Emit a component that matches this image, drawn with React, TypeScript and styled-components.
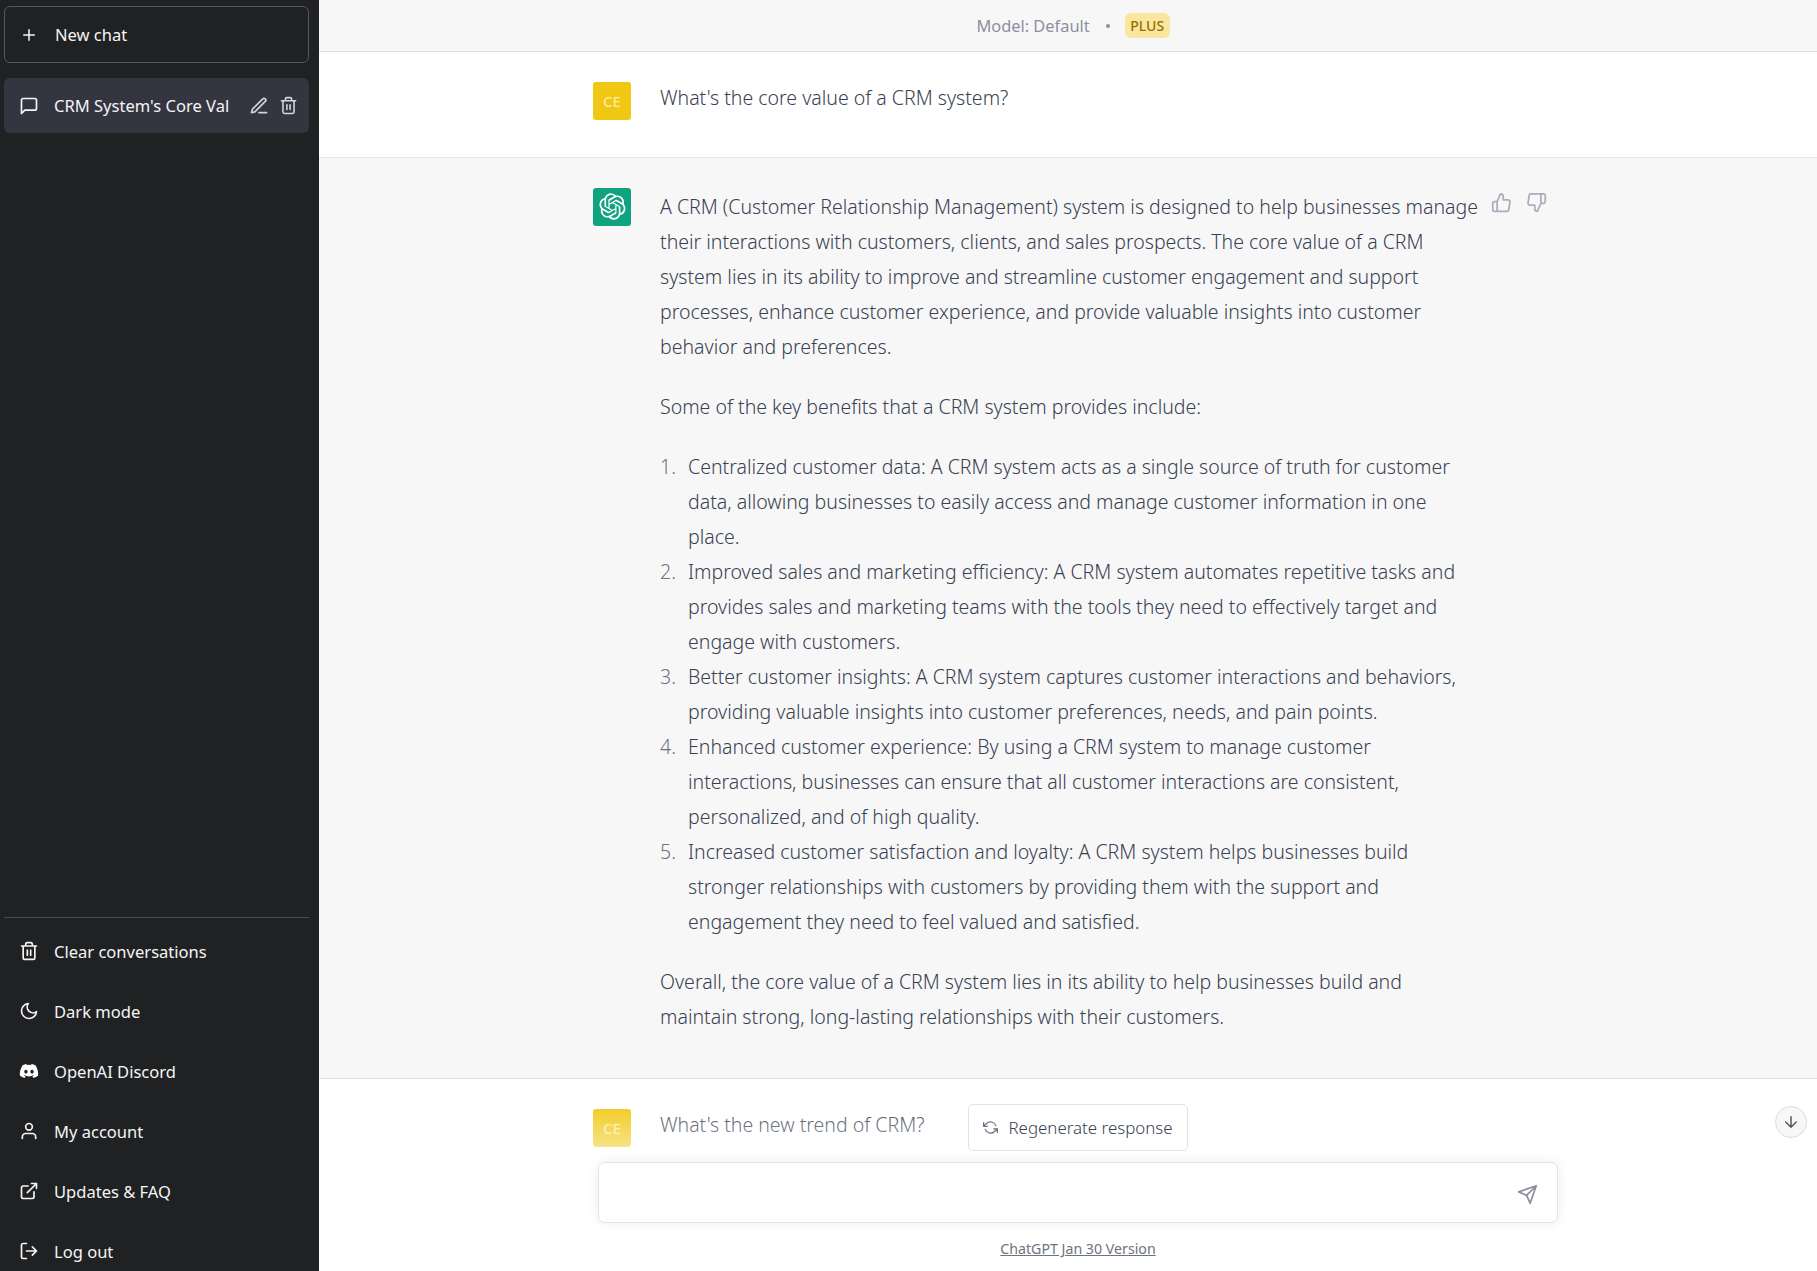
import * as React from "react";
import styled, { createGlobalStyle } from "styled-components";
import { FaDiscord } from "react-icons/fa";

const GlobalStyle = createGlobalStyle`
  html, body {
    margin: 0;
    padding: 0;
    background: #fff;
  }
  body {
    font-family: "Noto Sans", "Open Sans", sans-serif;
    color: #374151;
  }
  * {
    box-sizing: border-box;
  }
`;

const Page = styled.div`
  display: grid;
  grid-template-columns: 319px 1fr;
  width: 1817px;
  height: 1271px;
  overflow: hidden;
`;

const Sidebar = styled.aside`
  display: flex;
  flex-direction: column;
  height: 1271px;
  overflow: hidden;
  padding: 6px 10px 0 4px;
  background: #202123;
  color: #f5f5f5;
  font-size: 16.55px;
`;

const NewChatButton = styled.div`
  display: flex;
  flex: none;
  align-items: center;
  gap: 17px;
  height: 57px;
  padding-left: 15px;
  border: 1px solid #56565f;
  border-radius: 6px;
`;

const ChatList = styled.div`
  flex: 0 0 854px;
  padding-top: 15px;
`;

const ActiveChat = styled.div`
  display: flex;
  align-items: center;
  height: 55px;
  padding-left: 15px;
  border-radius: 6px;
  background: #343541;
`;

const ChatTitle = styled.span`
  margin-left: 15px;
  width: 179px;
  overflow: hidden;
  white-space: nowrap;
`;

const ChatActions = styled.span`
  display: flex;
  align-items: center;
  gap: 10px;
  margin-left: 16px;
  color: #d1d5db;
`;

const Divider = styled.div`
  flex: none;
  height: 1px;
  margin-bottom: 3px;
  background: #4a4b53;
`;

const NavItem = styled.div`
  display: flex;
  flex: none;
  align-items: center;
  gap: 15px;
  height: 60px;
  padding-left: 15px;
`;

const Main = styled.main`
  position: relative;
  display: flex;
  flex-direction: column;
  overflow: hidden;
  background: #fff;
`;

const TopBar = styled.header`
  display: flex;
  flex: none;
  align-items: center;
  justify-content: center;
  height: 52px;
  padding-left: 10px;
  border-bottom: 1px solid #dfdfe2;
  background: #f7f7f8;
  color: #8e8ea0;
  font-size: 16.4px;
`;

const Dot = styled.span`
  width: 4px;
  height: 4px;
  margin: 0 15px 0 16px;
  border-radius: 50%;
  background: #8e8ea0;
`;

const PlusBadge = styled.span`
  padding: 2px 5.5px;
  border-radius: 6px;
  background: #fae69e;
  color: #927201;
  font-size: 14px;
  font-weight: 500;
  line-height: 21px;
`;

const MessageRow = styled.section<{ $tone: "white" | "gray"; $height: number }>`
  display: flex;
  flex: none;
  height: ${(p) => p.$height}px;
  padding: 30px 0 0 274px;
  border-bottom: 1px solid ${(p) => (p.$tone === "gray" ? "#dfdfe2" : "#e6e6e8")};
  background: ${(p) => (p.$tone === "gray" ? "#f7f7f8" : "#fff")};
`;

const Avatar = styled.div<{ $bg: string }>`
  display: flex;
  flex: none;
  align-items: center;
  justify-content: center;
  width: 38px;
  height: 38px;
  padding-bottom: 1px;
  border-radius: 3px;
  background: ${(p) => p.$bg};
  color: #fdeb9c;
  font-size: 15px;
  font-weight: 500;
`;

const MessageText = styled.div<{ $top: number }>`
  width: 820px;
  margin: ${(p) => p.$top}px 0 0 29px;
  font-size: 19.5px;
  font-weight: 300;
  line-height: 34.95px;
`;

const Paragraph = styled.p`
  margin: 0 0 25.3px;
  &:last-child {
    margin-bottom: 0;
  }
`;

const NumberedList = styled.ol`
  margin: 0 0 25.3px;
  padding: 0;
  list-style: none;
  counter-reset: benefit;
`;

const ListItem = styled.li`
  display: grid;
  grid-template-columns: 28px 772px;
  counter-increment: benefit;
  &::before {
    content: counter(benefit) ".";
    color: #6b7280;
  }
`;

const Feedback = styled.div`
  display: flex;
  gap: 14px;
  margin: 4px 0 0 11px;
  color: #acacbe;
`;

const BottomFade = styled.div`
  position: absolute;
  right: 0;
  bottom: 0;
  left: 0;
  display: flex;
  flex-direction: column;
  align-items: center;
  height: 171px;
  padding: 4px 0 0 20px;
  background: linear-gradient(180deg, rgba(255, 255, 255, 0) 0%, rgba(255, 255, 255, 0.5) 28%, rgba(255, 255, 255, 0.96) 50%, #fff 70%);
`;

const RegenerateButton = styled.div`
  display: flex;
  flex: none;
  align-items: center;
  justify-content: center;
  gap: 10px;
  width: 220px;
  height: 47px;
  border: 1px solid #e3e3e6;
  border-radius: 5px;
  background: #fff;
  font-size: 16.9px;
  font-weight: 300;
  color: #374151;
`;

const RefreshGlyph = styled.span`
  display: flex;
  color: #6b7280;
`;

const InputBox = styled.div`
  display: flex;
  flex: none;
  align-items: center;
  justify-content: flex-end;
  width: 960px;
  height: 61px;
  margin-top: 11px;
  padding: 4px 19px 0 0;
  border: 1px solid #e4e4e7;
  border-radius: 7px;
  background: #fff;
  box-shadow: 0 0 12px rgba(0, 0, 0, 0.08);
  color: #8e8ea0;
`;

const VersionLink = styled.a`
  margin-top: 16px;
  color: #6f7280;
  font-size: 14.2px;
  line-height: 20px;
  text-decoration: underline;
`;

const ScrollDownButton = styled.div`
  position: absolute;
  top: 1106px;
  right: 10px;
  display: flex;
  align-items: center;
  justify-content: center;
  width: 32px;
  height: 32px;
  border: 1px solid #dcdce0;
  border-radius: 50%;
  background: #f7f7f8;
  color: #565869;
`;

const Svg = styled.svg<{ $size: number }>`
  flex: none;
  width: ${(p) => p.$size}px;
  height: ${(p) => p.$size}px;
  fill: none;
  stroke: currentColor;
  stroke-width: 2;
  stroke-linecap: round;
  stroke-linejoin: round;
`;

const DiscordIcon = styled(FaDiscord)`
  flex: none;
  width: 20px;
  height: 20px;
  color: #fff;
`;

const ICONS: Record<string, React.ReactNode> = {
  plus: <path d="M12 5v14M5 12h14" />,
  message: <path d="M21 15a2 2 0 0 1-2 2H7l-4 4V5a2 2 0 0 1 2-2h14a2 2 0 0 1 2 2z" />,
  edit: <path d="M12 20h9M16.5 3.5a2.12 2.12 0 0 1 3 3L7 19l-4 1 1-4L16.5 3.5z" />,
  trash: <path d="M3 6h18M19 6v14a2 2 0 0 1-2 2H7a2 2 0 0 1-2-2V6m3 0V4a2 2 0 0 1 2-2h4a2 2 0 0 1 2 2v2M10 11v6M14 11v6" />,
  moon: <path d="M21 12.79A9 9 0 1 1 11.21 3 7 7 0 0 0 21 12.79z" />,
  user: <path d="M20 21v-2a4 4 0 0 0-4-4H8a4 4 0 0 0-4 4v2M12 11a4 4 0 1 0 0-8 4 4 0 0 0 0 8z" />,
  external: <path d="M18 13v6a2 2 0 0 1-2 2H5a2 2 0 0 1-2-2V8a2 2 0 0 1 2-2h6M15 3h6v6M10 14L21 3" />,
  logout: <path d="M9 21H5a2 2 0 0 1-2-2V5a2 2 0 0 1 2-2h4M16 17l5-5-5-5M21 12H9" />,
  thumbUp: <path d="M14 9V5a3 3 0 0 0-3-3l-4 9v11h11.28a2 2 0 0 0 2-1.7l1.38-9a2 2 0 0 0-2-2.3zM7 22H4a2 2 0 0 1-2-2v-7a2 2 0 0 1 2-2h3" />,
  thumbDown: <path d="M10 15v4a3 3 0 0 0 3 3l4-9V2H5.72a2 2 0 0 0-2 1.7l-1.38 9a2 2 0 0 0 2 2.3zm7-13h2.67A2.31 2.31 0 0 1 22 4v7a2.31 2.31 0 0 1-2.33 2H17" />,
  refresh: <path d="M1 4v6h6M23 20v-6h-6M20.49 9A9 9 0 0 0 5.64 5.64L1 10m22 4l-4.64 4.36A9 9 0 0 1 3.51 15" />,
  send: <path d="M22 2L11 13M22 2l-7 20-4-9-9-4 20-7z" />,
  down: <path d="M12 5v14M19 12l-7 7-7-7" />,
};

function Icon({ name, size = 20 }: { name: string; size?: number }) {
  return (
    <Svg $size={size} viewBox="0 0 24 24">
      {ICONS[name]}
    </Svg>
  );
}

function OpenAILogo() {
  return (
    <svg width="27" height="27" viewBox="0 0 41 41" fill="#fff">
      <path d="M37.5324 16.8707C37.9808 15.5241 38.1363 14.0974 37.9886 12.6859C37.8409 11.2744 37.3934 9.91076 36.676 8.68622C35.6126 6.83404 33.9882 5.3676 32.0373 4.4985C30.0864 3.62941 27.9098 3.40259 25.8215 3.85078C24.8796 2.7893 23.7219 1.94125 22.4257 1.36341C21.1295 0.785575 19.7249 0.491269 18.3058 0.500197C16.1708 0.495044 14.0893 1.16803 12.3614 2.42214C10.6335 3.67624 9.34853 5.44666 8.6917 7.47815C7.30085 7.76286 5.98686 8.3414 4.8377 9.17505C3.68854 10.0087 2.73073 11.0782 2.02839 12.312C0.956464 14.1591 0.498905 16.2988 0.721698 18.4228C0.944492 20.5467 1.83612 22.5449 3.268 24.1293C2.81966 25.4759 2.66413 26.9026 2.81182 28.3141C2.95951 29.7256 3.40701 31.0892 4.12437 32.3138C5.18791 34.1659 6.8123 35.6322 8.76321 36.5013C10.7141 37.3704 12.8907 37.5973 14.9789 37.1492C15.9208 38.2107 17.0786 39.0587 18.3747 39.6366C19.6709 40.2144 21.0755 40.5087 22.4946 40.4998C24.6307 40.5054 26.7133 39.8321 28.4418 38.5772C30.1704 37.3223 31.4556 35.5506 32.1119 33.5179C33.5027 33.2332 34.8167 32.6547 35.9659 31.821C37.115 30.9874 38.0728 29.9178 38.7752 28.684C39.8458 26.8371 40.3023 24.6979 40.0789 22.5748C39.8556 20.4517 38.9639 18.4544 37.5324 16.8707ZM22.4978 37.8849C20.7443 37.8874 19.0459 37.2733 17.6994 36.1501C17.7601 36.117 17.8666 36.0586 17.936 36.0161L25.9004 31.4156C26.1003 31.3019 26.2663 31.137 26.3813 30.9378C26.4964 30.7386 26.5563 30.5124 26.5549 30.2825V19.0542L29.9213 20.998C29.9389 21.0068 29.9541 21.0198 29.9656 21.0359C29.977 21.052 29.9842 21.0707 29.9867 21.0902V30.3889C29.9842 32.375 29.1946 34.2791 27.7909 35.6841C26.3872 37.0892 24.4838 37.8806 22.4978 37.8849ZM6.39227 31.0064C5.51397 29.4888 5.19742 27.7107 5.49804 25.9832C5.55718 26.0187 5.66048 26.0818 5.73461 26.1244L13.699 30.7248C13.8975 30.8408 14.1233 30.902 14.3532 30.902C14.583 30.902 14.8088 30.8408 15.0073 30.7248L24.731 25.1103V28.9979C24.7321 29.0177 24.7283 29.0376 24.7199 29.0556C24.7115 29.0736 24.6988 29.0893 24.6829 29.1012L16.6317 33.7497C14.9096 34.7416 12.8643 35.0097 10.9447 34.4954C9.02506 33.9811 7.38785 32.7263 6.39227 31.0064ZM4.29707 13.6194C5.17156 12.0998 6.55279 10.9364 8.19885 10.3327C8.19885 10.4013 8.19491 10.5228 8.19491 10.6071V19.808C8.19351 20.0378 8.25334 20.2638 8.36823 20.4629C8.48312 20.6619 8.64893 20.8267 8.84863 20.9404L18.5723 26.5542L15.206 28.4979C15.1894 28.5089 15.1703 28.5155 15.1505 28.5173C15.1307 28.5191 15.1107 28.516 15.0924 28.5082L7.04046 23.8557C5.32135 22.8601 4.06716 21.2235 3.55289 19.3046C3.03862 17.3858 3.30624 15.3413 4.29707 13.6194ZM31.955 20.0556L22.2312 14.4411L25.5976 12.4981C25.6142 12.4872 25.6333 12.4805 25.6531 12.4787C25.6729 12.4769 25.6928 12.4801 25.7111 12.4879L33.7631 17.1364C34.9967 17.849 36.0017 18.8982 36.6606 20.1613C37.3194 21.4244 37.6047 22.849 37.4832 24.2684C37.3617 25.6878 36.8382 27.0432 35.9743 28.1759C35.1103 29.3086 33.9415 30.1717 32.6047 30.6641C32.6047 30.5947 32.6047 30.4733 32.6047 30.3889V21.188C32.6066 20.9586 32.5474 20.7328 32.4332 20.5338C32.319 20.3348 32.154 20.1698 31.955 20.0556ZM35.3055 15.0128C35.2464 14.9765 35.1431 14.9142 35.069 14.8717L27.1045 10.2712C26.906 10.1554 26.6803 10.0943 26.4504 10.0943C26.2206 10.0943 25.9948 10.1554 25.7963 10.2712L16.0726 15.8858V11.9982C16.0715 11.9783 16.0753 11.9585 16.0837 11.9405C16.0921 11.9225 16.1048 11.9068 16.1207 11.8949L24.1719 7.25025C25.4053 6.53903 26.8158 6.19376 28.2383 6.25482C29.6608 6.31589 31.0364 6.78077 32.2044 7.59508C33.3723 8.40939 34.2842 9.53945 34.8334 10.8531C35.3826 12.1667 35.5464 13.6095 35.3055 15.0128ZM14.2424 21.9419L10.8752 19.9981C10.8576 19.9893 10.8423 19.9763 10.8309 19.9602C10.8195 19.9441 10.8122 19.9254 10.8098 19.9058V10.6071C10.8107 9.18295 11.2173 7.78848 11.9819 6.58696C12.7466 5.38544 13.8377 4.42659 15.1275 3.82264C16.4173 3.21869 17.8524 2.99464 19.2649 3.1767C20.6775 3.35876 22.0089 3.93941 23.1034 4.85067C23.0427 4.88379 22.937 4.94215 22.8668 4.98473L14.9024 9.58517C14.7025 9.69878 14.5366 9.86356 14.4215 10.0626C14.3065 10.2616 14.2466 10.4877 14.2479 10.7175L14.2424 21.9419ZM16.071 17.9991L20.4018 15.4978L24.7325 17.9975V22.9985L20.4018 25.4983L16.071 22.9985V17.9991Z" />
    </svg>
  );
}

const BENEFITS = [
  "Centralized customer data: A CRM system acts as a single source of truth for customer data, allowing businesses to easily access and manage customer information in one place.",
  "Improved sales and marketing efficiency: A CRM system automates repetitive tasks and provides sales and marketing teams with the tools they need to effectively target and engage with customers.",
  "Better customer insights: A CRM system captures customer interactions and behaviors, providing valuable insights into customer preferences, needs, and pain points.",
  "Enhanced customer experience: By using a CRM system to manage customer interactions, businesses can ensure that all customer interactions are consistent, personalized, and of high quality.",
  "Increased customer satisfaction and loyalty: A CRM system helps businesses build stronger relationships with customers by providing them with the support and engagement they need to feel valued and satisfied.",
];

const NAV_LINKS = [
  { icon: "trash", label: "Clear conversations" },
  { icon: "moon", label: "Dark mode" },
  { icon: "discord", label: "OpenAI Discord" },
  { icon: "user", label: "My account" },
  { icon: "external", label: "Updates & FAQ" },
  { icon: "logout", label: "Log out" },
];

export default function App() {
  return (
    <Page>
      <GlobalStyle />
      <Sidebar>
        <NewChatButton>
          <Icon name="plus" size={18} />
          New chat
        </NewChatButton>
        <ChatList>
          <ActiveChat>
            <Icon name="message" size={20} />
            <ChatTitle>CRM System's Core Val</ChatTitle>
            <ChatActions>
              <Icon name="edit" size={20} />
              <Icon name="trash" size={19} />
            </ChatActions>
          </ActiveChat>
        </ChatList>
        <Divider />
        {NAV_LINKS.map((link) => (
          <NavItem key={link.label}>
            {link.icon === "discord" ? <DiscordIcon /> : <Icon name={link.icon} size={20} />}
            {link.label}
          </NavItem>
        ))}
      </Sidebar>
      <Main>
        <TopBar>
          Model: Default
          <Dot />
          <PlusBadge>PLUS</PlusBadge>
        </TopBar>
        <MessageRow $tone="white" $height={106}>
          <Avatar $bg="#f0c814">CE</Avatar>
          <MessageText $top={-1}>What's the core value of a CRM system?</MessageText>
        </MessageRow>
        <MessageRow $tone="gray" $height={921}>
          <Avatar $bg="#10a37f">
            <OpenAILogo />
          </Avatar>
          <MessageText $top={2}>
            <Paragraph>
              A CRM (Customer Relationship Management) system is designed to help businesses manage their
              interactions with customers, clients, and sales prospects. The core value of a CRM system lies in
              its ability to improve and streamline customer engagement and support processes, enhance customer
              experience, and provide valuable insights into customer behavior and preferences.
            </Paragraph>
            <Paragraph>Some of the key benefits that a CRM system provides include:</Paragraph>
            <NumberedList>
              {BENEFITS.map((item) => (
                <ListItem key={item}>
                  <span>{item}</span>
                </ListItem>
              ))}
            </NumberedList>
            <Paragraph>
              Overall, the core value of a CRM system lies in its ability to help businesses build and maintain
              strong, long-lasting relationships with their customers.
            </Paragraph>
          </MessageText>
          <Feedback>
            <Icon name="thumbUp" size={21} />
            <Icon name="thumbDown" size={21} />
          </Feedback>
        </MessageRow>
        <MessageRow $tone="white" $height={106}>
          <Avatar $bg="#f0c814">CE</Avatar>
          <MessageText $top={-1}>What's the new trend of CRM?</MessageText>
        </MessageRow>
        <BottomFade>
          <RegenerateButton>
            <RefreshGlyph>
              <Icon name="refresh" size={15} />
            </RefreshGlyph>
            Regenerate response
          </RegenerateButton>
          <InputBox>
            <Icon name="send" size={21} />
          </InputBox>
          <VersionLink>ChatGPT Jan 30 Version</VersionLink>
        </BottomFade>
        <ScrollDownButton>
          <Icon name="down" size={18} />
        </ScrollDownButton>
      </Main>
    </Page>
  );
}
